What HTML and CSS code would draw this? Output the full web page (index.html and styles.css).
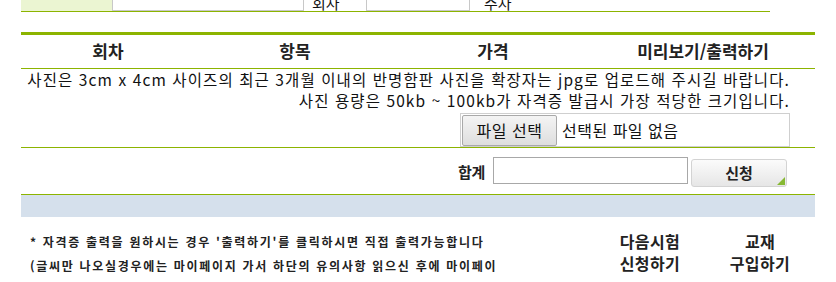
FILE: index.html
```html
<!DOCTYPE html>
<html lang="ko">
<head>
<meta charset="utf-8">
<link rel="stylesheet" href="styles.css">
</head>
<body>
<div class="wrap">
  <div class="top-row">
    <div class="top-th"></div>
    <div class="top-input w1"></div>
    <div class="top-label">회차</div>
    <div class="top-input w2"></div>
    <div class="top-label2">주차</div>
  </div>

  <div class="table">
    <div class="thead">
      <div class="th c1">회차</div>
      <div class="th c2">항목</div>
      <div class="th c3">가격</div>
      <div class="th c4">미리보기/출력하기</div>
    </div>
    <div class="notice">
      <p>사진은 3cm x 4cm 사이즈의 최근 3개월 이내의 반명함판 사진을 확장자는 jpg로 업로드해 주시길 바랍니다.</p>
      <p>사진 용량은 50kb ~ 100kb가 자격증 발급시 가장 적당한 크기입니다.</p>
      <div class="file-row">
        <div class="file-box"><span class="file-btn">파일 선택</span><span class="file-name">선택된 파일 없음</span></div>
      </div>
    </div>
    <div class="sum-row">
      <span class="sum-label">합계</span>
      <span class="sum-input"></span>
      <span class="apply-btn">신청</span>
    </div>
    <div class="band"></div>
  </div>

  <div class="bottom">
    <div class="guide">
      <p>* 자격증 출력을 원하시는 경우 '출력하기'를 클릭하시면 직접 출력가능합니다</p>
      <p>(글씨만 나오실경우에는 마이페이지 가서 하단의 유의사항 읽으신 후에 마이페이</p>
      <p>지에서 출력하시기 바랍니다.)</p>
    </div>
    <div class="links">
      <div class="link">다음시험<br>신청하기</div>
      <div class="link">교재<br>구입하기</div>
    </div>
  </div>
</div>
</body>
</html>
```

FILE: styles.css
```css
* { box-sizing: border-box; }
html, body { margin: 0; padding: 0; background: #fff; }
body {
  font-family: "Noto Sans CJK KR", "Noto Sans", sans-serif;
  color: #222;
  overflow: hidden;
  height: 282px;
}
p { margin: 0; }
.wrap { padding-left: 21px; width: 836px; }

.top-row {
  width: 749px;
  height: 12px;
  display: flex;
  border-bottom: 1px solid #8cb400;
  overflow: hidden;
}
.top-th { width: 91px; height: 11px; background: #ebf5d2; }
.top-input {
  height: 11px;
  border-left: 1px solid #c8c8c8;
  border-right: 1px solid #c8c8c8;
  border-bottom: 1px solid #c8c8c8;
}
.w1 { width: 192px; }
.w2 { width: 104px; }
.top-label, .top-label2 {
  font-size: 15px;
  line-height: 15px;
  margin-top: -5px;
  color: #111;
}
.top-label { width: 62px; padding-left: 8px; }
.top-label2 { padding-left: 14px; }

.table { width: 794px; margin-top: 20px; border-top: 3px solid #8cb400; }
.thead {
  display: flex;
  height: 34px;
  align-items: center;
  border-bottom: 1px solid #8cb400;
  padding-bottom: 2px;
}
.th { font-size: 17px; font-weight: bold; text-align: center; color: #222; }
.c1 { width: 174px; }
.c2 { width: 200px; }
.c3 { width: 196px; }
.c4 { width: 224px; }

.notice {
  text-align: right;
  padding-right: 25px;
  font-size: 15.5px;
  line-height: 21px;
  color: #111;
  border-bottom: 1px solid #8cb400;
  letter-spacing: 1.1px;
}
.notice p { white-space: nowrap; }
.file-row { display: flex; justify-content: flex-end; padding-top: 2px; }
.file-box {
  width: 330px;
  height: 34px;
  border: 1px solid #cfcfcf;
  display: flex;
  align-items: center;
  padding-left: 1px;
  text-align: left;
  letter-spacing: 0.5px;
}
.file-btn {
  width: 95px;
  height: 31px;
  background: linear-gradient(#f4f4f4, #dedede);
  border: 1px solid #a9a9a9;
  border-radius: 2px;
  font-size: 16px;
  line-height: 29px;
  text-align: center;
}
.file-name { font-size: 16px; padding-left: 5px; }

.sum-row {
  height: 47px;
  display: flex;
  align-items: center;
  padding-left: 437px;
  border-bottom: 1px solid #8cb400;
}
.sum-label { font-size: 15px; font-weight: bold; width: 35px; letter-spacing: -0.3px; }
.sum-input { width: 195px; height: 27px; border: 1px solid #a8a8a8; margin-top: -2px; }
.apply-btn {
  position: relative;
  width: 96px;
  height: 28px;
  margin-left: 3px;
  margin-top: 3px;
  border: 1px solid #d3d3d3;
  border-radius: 3px;
  background: linear-gradient(#fbfbfb, #e6e6e6);
  font-size: 15px;
  font-weight: bold;
  line-height: 26px;
  text-align: center;
  color: #222;
}
.apply-btn::after {
  content: "";
  position: absolute;
  right: 1px;
  bottom: 1px;
  width: 0;
  height: 0;
  border-left: 8px solid transparent;
  border-bottom: 8px solid #86b832;
}
.band { height: 22px; background: #d5e0ec; }

.bottom { display: flex; width: 794px; padding-top: 13px; }
.guide {
  width: 585px;
  padding-left: 9px;
  font-size: 12px;
  font-weight: bold;
  line-height: 24px;
  color: #222;
  letter-spacing: 1.7px;
  white-space: nowrap;
}
.links { display: flex; }
.link {
  font-size: 16px;
  font-weight: bold;
  line-height: 22px;
  text-align: center;
  width: 110px;
  color: #222;
  letter-spacing: 0.4px;
}
```
